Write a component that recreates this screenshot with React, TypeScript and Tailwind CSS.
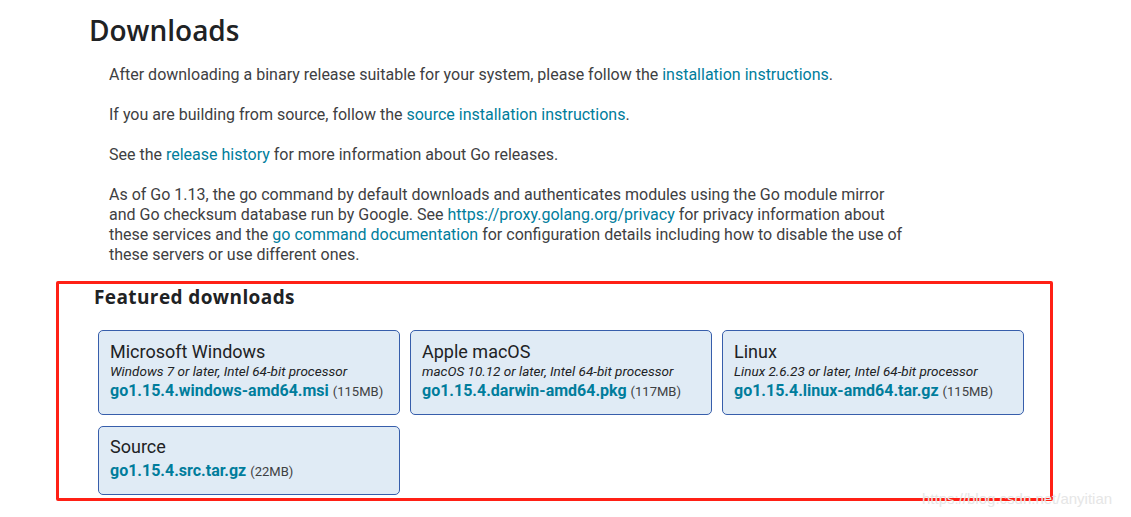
import React from "react";

const link = "text-[#007d9c]";

function Card({ title, sub, file, size }: { title: string; sub?: string; file: string; size: string }) {
  return (
    <div className={`w-[302px] rounded-[5px] border border-[#375eab] bg-[#e0ebf5] px-[11px] pb-[12px] ${sub ? "pt-[10px]" : "pt-[9px]"}`}>
      <div className="text-[18px] leading-[22px] text-[#202224]">{title}</div>
      {sub && <div className="text-[13.5px] italic leading-[16px] text-[#202224]">{sub}</div>}
      <div className={`leading-[20px] ${sub ? "mt-[2px]" : "mt-[3px]"}`}>
        <span className={`text-[16px] font-bold ${link}`}>{file}</span>{" "}
        <span className="text-[13px] text-[#3e4042]">({size})</span>
      </div>
    </div>
  );
}

export default function App() {
  return (
    <div className="relative h-[517px] w-[1131px] overflow-hidden bg-white text-[#3e4042]" style={{ fontFamily: "Roboto, 'Liberation Sans', sans-serif" }}>
      <h1 className="pl-[89px] pt-[13px] text-[28px] font-semibold leading-[34px] text-[#202224]" style={{ fontFamily: "'Open Sans', Inter, sans-serif" }}>
        Downloads
      </h1>
      <div className="pl-[109px] pt-[18px] text-[16px] leading-[20px]">
        <p>
          After downloading a binary release suitable for your system, please follow the{" "}
          <span className={link}>installation instructions</span>.
        </p>
        <p className="mt-[20px]">
          If you are building from source, follow the <span className={link}>source installation instructions</span>.
        </p>
        <p className="mt-[20px]">
          See the <span className={link}>release history</span> for more information about Go releases.
        </p>
        <p className="mt-[20px] w-[800px]">
          As of Go 1.13, the go command by default downloads and authenticates modules using the Go module mirror
          and Go checksum database run by Google. See <span className={link}>https://proxy.golang.org/privacy</span> for
          privacy information about these services and the <span className={link}>go command documentation</span> for
          configuration details including how to disable the use of these servers or use different ones.
        </p>
      </div>
      <div className="ml-[56px] mt-[16px] h-[220px] w-[997px] border-[3px] border-[#ff2015] rounded-[2px]">
        <h2 className="pl-[35px] pt-[1px] text-[19px] font-bold leading-[24px] tracking-[0.4px] text-[#202224]" style={{ fontFamily: "'Open Sans', Inter, sans-serif" }}>
          Featured downloads
        </h2>
        <div className="ml-[39px] mt-[21px] flex flex-wrap gap-x-[10px] gap-y-[11px] w-[930px]">
          <Card title="Microsoft Windows" sub="Windows 7 or later, Intel 64-bit processor" file="go1.15.4.windows-amd64.msi" size="115MB" />
          <Card title="Apple macOS" sub="macOS 10.12 or later, Intel 64-bit processor" file="go1.15.4.darwin-amd64.pkg" size="117MB" />
          <Card title="Linux" sub="Linux 2.6.23 or later, Intel 64-bit processor" file="go1.15.4.linux-amd64.tar.gz" size="115MB" />
          <Card title="Source" file="go1.15.4.src.tar.gz" size="22MB" />
        </div>
      </div>
      <div className="absolute left-[922px] top-[489px] text-[15px] leading-[20px] text-[#e6e6e6]" style={{ fontFamily: "'Liberation Sans', sans-serif" }}>
        https://blog.csdn.net/anyitian
      </div>
    </div>
  );
}
